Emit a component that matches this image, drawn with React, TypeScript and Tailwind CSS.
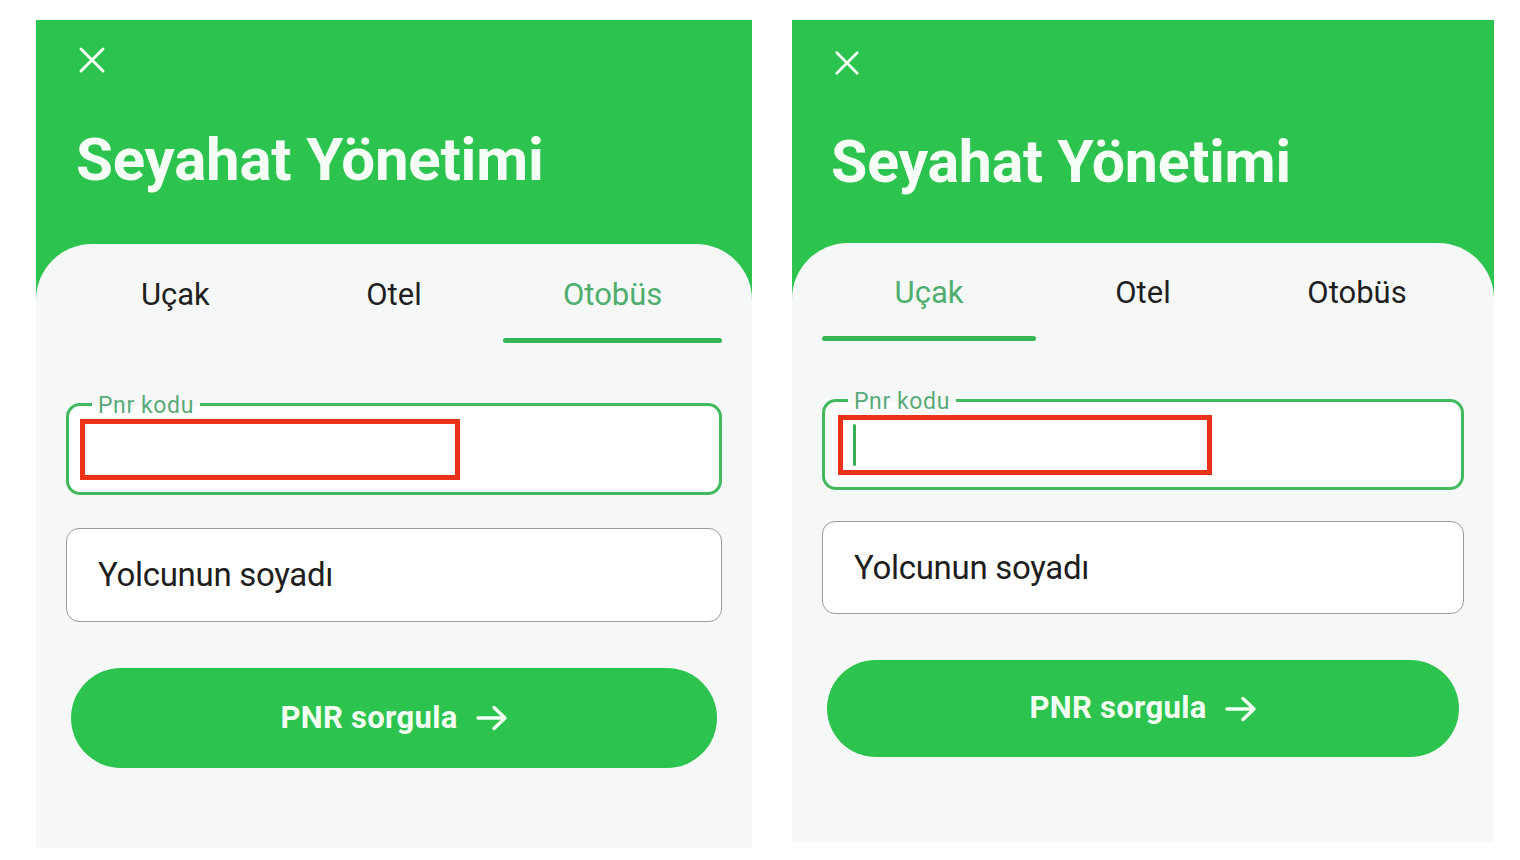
const GREEN = "bg-[#2dc34f]";

type Variant = {
  panel: string;
  header: string;
  close: string;
  closeSize: number;
  title: string;
  tabsPad: string;
  underlineGap: string;
  pnr: string;
  redBox: string;
  cursor: boolean;
  surname: string;
  button: string;
  active: number;
};

const left: Variant = {
  panel: "w-[716px] h-[828px]",
  header: "h-[224px]",
  close: "mt-[26px] ml-[42px]",
  closeSize: 28,
  title: "mt-[56px] ml-[40px] text-[60px]",
  tabsPad: "pt-[33px]",
  underlineGap: "mt-[25px]",
  pnr: "mt-[60px] h-[92px]",
  redBox: "left-[11px] top-[13px] w-[380px] h-[61px]",
  cursor: false,
  surname: "mt-[33px] h-[94px]",
  button: "mt-[46px] h-[100px]",
  active: 2,
};

const right: Variant = {
  panel: "w-[702px] h-[822px]",
  header: "h-[223px]",
  close: "mt-[30px] ml-[42px]",
  closeSize: 26,
  title: "mt-[56px] ml-[39px] text-[59px]",
  tabsPad: "pt-[32px]",
  underlineGap: "mt-[25px]",
  pnr: "mt-[58px] h-[91px]",
  redBox: "left-[13px] top-[13px] w-[374px] h-[60px]",
  cursor: true,
  surname: "mt-[31px] h-[93px]",
  button: "mt-[46px] h-[97px]",
  active: 0,
};

const tabs = ["Uçak", "Otel", "Otobüs"];

function CloseIcon({ size }: { size: number }) {
  return (
    <svg width={size} height={size} viewBox="0 0 28 28" fill="none" aria-hidden="true">
      <path d="M3 3 25 25M25 3 3 25" stroke="#f4fff4" strokeWidth="3" strokeLinecap="round" />
    </svg>
  );
}

function Arrow() {
  return (
    <svg width="32" height="26" viewBox="0 0 32 26" fill="none" aria-hidden="true">
      <path d="M2 13h27M18 2.5 29 13 18 23.5" stroke="#f4fff4" strokeWidth="3.4" strokeLinecap="round" strokeLinejoin="round" />
    </svg>
  );
}

function Panel({ v }: { v: Variant }) {
  return (
    <div className={`${v.panel} ${GREEN} flex flex-col overflow-hidden`}>
      <div className={`${v.header} flex flex-col shrink-0`}>
        <div className={v.close}>
          <CloseIcon size={v.closeSize} />
        </div>
        <h1 className={`${v.title} font-bold leading-none text-[#f6fff6] tracking-[-0.2px]`}>
          Seyahat Yönetimi
        </h1>
      </div>

      <div className="flex-1 rounded-t-[56px] bg-[#f6f8f8] flex flex-col">
        <div className={`flex px-[30px] ${v.tabsPad}`}>
          {tabs.map((t, i) => (
            <div key={t} className="flex-1 flex flex-col items-center">
              <span
                className={`text-[31px] leading-[36px] ${
                  i === v.active ? "text-[#4fae6e]" : "text-[#1f1f1f]"
                }`}
              >
                {t}
              </span>
              <div
                className={`${v.underlineGap} h-[5px] w-full rounded-full ${
                  i === v.active ? "bg-[#35b754]" : "bg-transparent"
                }`}
              />
            </div>
          ))}
        </div>

        <div className={`relative mx-[30px] ${v.pnr} rounded-[14px] border-[3px] border-[#41b95c] bg-white`}>
          <span className="absolute left-[23px] top-[-13px] px-[6px] text-[23px] leading-[26px] tracking-[0.6px] text-[#5aa978] bg-[linear-gradient(to_bottom,#f6f8f8_50%,#ffffff_50%)]">
            Pnr kodu
          </span>
          {v.cursor && <div className="absolute left-[28px] top-[22px] w-[3px] h-[42px] bg-[#3aab57] rounded-full" />}
          <div className={`absolute ${v.redBox} border-[5px] border-[#e8321a]`} />
        </div>

        <div className={`mx-[30px] ${v.surname} rounded-[13px] border-[1.5px] border-[#9b9b9b] bg-white flex items-center pl-[31px]`}>
          <span className="text-[33px] text-[#1e1e1e] tracking-[-0.3px]">Yolcunun soyadı</span>
        </div>

        <button
          type="button"
          className={`mx-[35px] ${v.button} rounded-full ${GREEN} flex items-center justify-center gap-[18px] text-[31px] font-bold text-[#f4fff4]`}
        >
          <span className="tracking-[0.3px]">PNR sorgula</span>
          <Arrow />
        </button>
      </div>
    </div>
  );
}

export default function App() {
  return (
    <div className="w-[1520px] h-[860px] bg-white flex items-start gap-[40px] pl-[36px] pt-[20px] font-['Roboto',sans-serif]">
      <Panel v={left} />
      <Panel v={right} />
    </div>
  );
}
